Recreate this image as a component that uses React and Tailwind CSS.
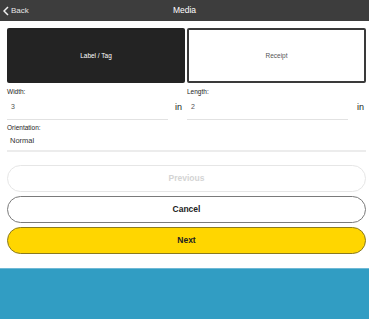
import React from 'react';

const font = { fontFamily: '"Liberation Sans", Arial, sans-serif' };

const App = () => {
    return (
        <div className="w-[369px] h-[319px] bg-white flex flex-col overflow-hidden antialiased" style={font}>
            {/* Header */}
            <div className="h-[21px] bg-[#3d3d3d] flex items-center relative shrink-0">
                <div className="flex items-center pl-[3px] gap-[2px] text-[#e6e6e6]">
                    <svg width="6" height="10" viewBox="0 0 6 10">
                        <path d="M5 1 L1 5 L5 9" fill="none" stroke="#f0f0f0" strokeWidth="1.5" />
                    </svg>
                    <span className="text-[8px]">Back</span>
                </div>
                <div className="absolute inset-0 flex items-center justify-center text-white text-[8.5px]">Media</div>
            </div>

            {/* Media type tiles */}
            <div className="flex gap-[2px] pl-[7px] pr-[3px] mt-[7px]">
                <div className="w-[178px] h-[55px] bg-[#232323] rounded-[2px] flex items-center justify-center text-white text-[6.5px]">
                    Label / Tag
                </div>
                <div className="w-[179px] h-[55px] bg-white border-2 border-[#3a3a3a] rounded-[2px] flex items-center justify-center text-[#555] text-[6.5px]">
                    Receipt
                </div>
            </div>

            {/* Width / Length */}
            <div className="flex pl-[7px] pr-[3px] mt-[4px]">
                <div className="w-[180px] flex flex-col">
                    <span className="text-[6.5px] text-[#222] h-[9px] leading-[9px]">Width:</span>
                    <div className="flex items-end">
                        <div className="w-[161px] h-[24px] border-b border-[#e2e2e2] flex items-center pl-[4px] text-[7px] text-[#555]">3</div>
                        <span className="ml-[7px] mb-[6px] text-[9px] text-[#222]">in</span>
                    </div>
                </div>
                <div className="flex-1 flex flex-col">
                    <span className="text-[6.5px] text-[#222] h-[9px] leading-[9px]">Length:</span>
                    <div className="flex items-end">
                        <div className="w-[161px] h-[24px] border-b border-[#e2e2e2] flex items-center pl-[4px] text-[7px] text-[#555]">2</div>
                        <span className="ml-auto mr-[2px] mb-[6px] text-[9px] text-[#222]">in</span>
                    </div>
                </div>
            </div>

            {/* Orientation */}
            <div className="flex flex-col pl-[7px] pr-[3px] mt-[3px]">
                <span className="text-[6.5px] text-[#222] h-[9px] leading-[9px]">Orientation:</span>
                <div className="h-[20px] border-b-2 border-[#ececec] flex items-center pl-[3px] text-[7.5px] text-[#333]">Normal</div>
            </div>

            {/* Buttons */}
            <div className="flex flex-col gap-[4px] pl-[7px] pr-[3px] mt-[13px]">
                <button className="h-[27px] rounded-full border border-[#e6e6e6] bg-white text-[#d4d4d4] font-bold text-[8.5px]">Previous</button>
                <button className="h-[27px] rounded-full border border-[#7a7a7a] bg-white text-[#222] font-bold text-[8.5px]">Cancel</button>
                <button className="h-[27px] rounded-full border border-[#8a7a20] bg-[#ffd600] text-[#222] font-bold text-[8.5px]">Next</button>
            </div>

            {/* Bottom banner */}
            <div className="mt-[14px] flex-1 bg-[#319dc3] border-t border-[#6fb9d6]"></div>
        </div>
    );
};

export default App;
